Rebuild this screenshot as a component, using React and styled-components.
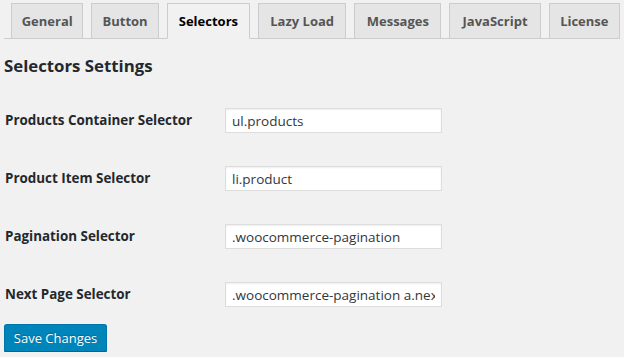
import React from 'react';
import styled, { createGlobalStyle } from 'styled-components';

const GlobalStyle = createGlobalStyle`
  html, body {
    margin: 0;
    padding: 0;
    background: #f1f1f1;
  }
  body {
    font-family: "Open Sans", "Noto Sans", sans-serif;
    color: #23282d;
  }
`;

const Page = styled.div`
  padding: 0 4px;
`;

const TabBar = styled.nav`
  display: flex;
  gap: 8px;
  padding: 3px 0 0 7px;
  height: 35px;
  border-bottom: 1px solid #ccc;
`;

const Tab = styled.a`
  box-sizing: border-box;
  display: flex;
  align-items: center;
  justify-content: center;
  width: ${(p) => p.$w}px;
  height: ${(p) => (p.$active ? 36 : 35)}px;
  border: 1px solid #ccc;
  border-bottom: ${(p) => (p.$active ? '1px solid #f1f1f1' : 'none')};
  background: ${(p) => (p.$active ? '#f1f1f1' : '#e5e5e5')};
  color: ${(p) => (p.$active ? '#000' : '#555')};
  font-size: 13px;
  font-weight: 700;
  text-decoration: none;
  padding-bottom: ${(p) => (p.$active ? 1 : 0)}px;
`;

const Heading = styled.h2`
  margin: 15px 0 0;
  font-size: 16.8px;
  line-height: 24px;
  font-weight: 700;
  color: #23282d;
`;

const Table = styled.div`
  margin-top: 13px;
`;

const Row = styled.div`
  display: grid;
  grid-template-columns: 221px 217px;
  align-items: center;
  padding: 17px 0 16px;
`;

const Label = styled.label`
  font-size: 13.4px;
  font-weight: 700;
  line-height: 25px;
  padding-left: 1px;
  color: #23282d;
`;

const Input = styled.input`
  box-sizing: border-box;
  width: 217px;
  height: 25px;
  margin: 0;
  padding: 0 6px;
  border: 1px solid #ddd;
  box-shadow: inset 0 1px 2px rgba(0, 0, 0, 0.07);
  background: #fff;
  font-family: inherit;
  font-size: 13.5px;
  color: #32373c;
  outline: none;
`;

const SaveButton = styled.button`
  box-sizing: border-box;
  margin-top: 1px;
  width: 103px;
  height: 28px;
  padding: 0;
  border: 1px solid #0073aa;
  border-bottom-color: #006799;
  border-radius: 3px;
  background: #0085ba;
  box-shadow: 0 1px 0 #006799;
  color: #fff;
  font-family: inherit;
  font-size: 13px;
  text-shadow: 0 -1px 1px #006799;
  cursor: pointer;
`;

const tabs = [
  { name: 'General', w: 73 },
  { name: 'Button', w: 68 },
  { name: 'Selectors', w: 84, active: true },
  { name: 'Lazy Load', w: 89 },
  { name: 'Messages', w: 88 },
  { name: 'JavaScript', w: 92 },
  { name: 'License', w: 72 },
];

const fields = [
  { label: 'Products Container Selector', value: 'ul.products' },
  { label: 'Product Item Selector', value: 'li.product' },
  { label: 'Pagination Selector', value: '.woocommerce-pagination' },
  { label: 'Next Page Selector', value: '.woocommerce-pagination a.next' },
];

export default function App() {
  return (
    <Page>
      <GlobalStyle />
      <TabBar>
        {tabs.map((t) => (
          <Tab key={t.name} href="#" $w={t.w} $active={t.active}>
            {t.name}
          </Tab>
        ))}
      </TabBar>
      <Heading>Selectors Settings</Heading>
      <Table>
        {fields.map((f) => (
          <Row key={f.label}>
            <Label>{f.label}</Label>
            <Input type="text" defaultValue={f.value} />
          </Row>
        ))}
      </Table>
      <SaveButton>Save Changes</SaveButton>
    </Page>
  );
}
